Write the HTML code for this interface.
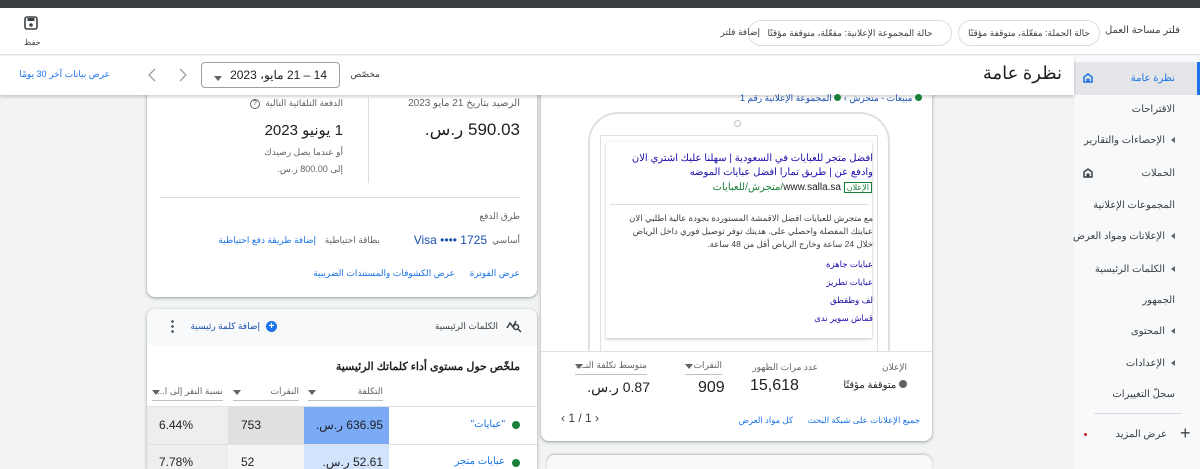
<!DOCTYPE html>
<html style="width:1200px;height:469px;overflow:hidden"><head><meta charset="utf-8"><style>
*{margin:0;padding:0;box-sizing:border-box}
body{width:1200px;height:469px;overflow:hidden;background:#f1f3f4;font-family:"Liberation Sans","Noto Sans CJK SC",sans-serif;color:#3c4043;font-size:10px;position:relative}
.a{position:absolute;white-space:nowrap}
.r{direction:rtl}
.blue{color:#1a73e8}
.card{position:absolute;background:#fff;border-radius:8px;box-shadow:0 1px 2px rgba(60,64,67,.3),0 1px 3px 1px rgba(60,64,67,.15)}
.nav{position:absolute;right:25px;font-size:10px;color:#3c4043;direction:rtl}
.tri{display:inline-block;width:0;height:0;border-top:3px solid transparent;border-bottom:3px solid transparent;border-right:4px solid #5f6368;margin-left:6px}
.hdr{border-bottom:1px solid #bdc1c6;padding-bottom:3px;font-size:9px;color:#5f6368;overflow:hidden}
.dd{display:inline-block;border-left:4px solid transparent;border-right:4px solid transparent;border-top:5px solid #5f6368}
</style></head><body>
<div class="a" style="left:0;top:0;width:1200px;height:8px;background:#3c4043"></div>
<div class="a" style="left:0;top:8px;width:1200px;height:47px;background:#fff;border-bottom:1px solid #e0e0e0"></div>
<svg class="a" style="left:24px;top:16px" width="14" height="14" viewBox="0 0 14 14"><rect x="1" y="1" width="12" height="12" rx="2" fill="none" stroke="#3c4043" stroke-width="1.6"/><rect x="3.5" y="2" width="7" height="3" fill="#3c4043"/><circle cx="7" cy="9" r="1.8" fill="#3c4043"/></svg>
<div class="a" style="left:24px;top:38px;font-size:8px">حفظ</div>
<div class="a r" style="right:20px;top:25px;font-size:10px">فلتر مساحة العمل</div>
<div class="a r" style="left:958px;top:20px;width:142px;height:26px;border:1px solid #dadce0;border-radius:13px;font-size:9px;line-height:24px;text-align:center;overflow:hidden">حالة الحملة: مفعّلة، متوقفة مؤقتًا</div>
<div class="a r" style="left:748px;top:20px;width:204px;height:26px;border:1px solid #dadce0;border-radius:13px;font-size:9px;line-height:24px;text-align:center;overflow:hidden">حالة المجموعة الإعلانية: مفعّلة، متوقفة مؤقتًا</div>
<div class="a r" style="right:440px;top:27px;font-size:9px">إضافة فلتر</div>
<!-- nav -->
<div class="a" style="left:1074px;top:56px;width:126px;height:413px;background:#f8f9fa"></div>
<div class="a" style="left:1074px;top:62px;width:123px;height:33px;background:#e3e5e8"></div>
<div class="a" style="left:1197px;top:62px;width:3px;height:33px;background:#1a73e8"></div>
<svg class="a" style="left:1083px;top:73px" width="10" height="10" viewBox="0 0 10 10"><path d="M1 9V4l4-3 4 3v5z" fill="none" stroke="#1a73e8" stroke-width="1.5"/><rect x="3.5" y="5.5" width="3" height="3.5" fill="#1a73e8"/></svg>
<div class="nav" style="top:73px;color:#1a73e8">نظرة عامة</div>
<div class="nav" style="top:104px">الاقتراحات</div>
<div class="nav" style="top:135px"><span class="tri"></span>الإحصاءات والتقارير</div>
<svg class="a" style="left:1083px;top:168px" width="10" height="10" viewBox="0 0 10 10"><path d="M1 9V4l4-3 4 3v5z" fill="none" stroke="#3c4043" stroke-width="1.5"/><rect x="3.5" y="5.5" width="3" height="3.5" fill="#3c4043"/></svg>
<div class="nav" style="top:168px">الحملات</div>
<div class="nav" style="top:200px">المجموعات الإعلانية</div>
<div class="nav" style="top:231px"><span class="tri"></span>الإعلانات ومواد العرض</div>
<div class="nav" style="top:264px"><span class="tri"></span>الكلمات الرئيسية</div>
<div class="nav" style="top:295px">الجمهور</div>
<div class="nav" style="top:326px"><span class="tri"></span>المحتوى</div>
<div class="nav" style="top:358px"><span class="tri"></span>الإعدادات</div>
<div class="nav" style="top:389px">سجلّ التغييرات</div>
<div class="a" style="left:1094px;top:413px;width:88px;height:1px;background:#dadce0"></div>
<div class="a" style="left:1180px;top:424px;font-size:18px;color:#3c4043;line-height:18px">+</div>
<div class="nav" style="top:429px;right:33px">عرض المزيد</div>
<div class="a" style="left:1084px;top:433px;width:3px;height:3px;border-radius:50%;background:#c5221f"></div>
<!-- cards -->
<div class="card" style="left:147px;top:60px;width:390px;height:237px"></div>
<div class="card" style="left:541px;top:80px;width:391px;height:361px"></div>
<div class="a" style="left:547px;top:455px;width:385px;height:14px;background:#f8f9fa;border-radius:8px 8px 0 0;box-shadow:0 -1px 2px rgba(60,64,67,.3)"></div>
<div class="a" style="left:147px;top:309px;width:390px;height:160px;background:#fff;border-radius:8px 8px 0 0;box-shadow:0 1px 2px rgba(60,64,67,.3),0 1px 3px 1px rgba(60,64,67,.15);overflow:hidden">
 <div style="position:absolute;left:0;top:0;width:390px;height:36px;background:#f8f9fa"></div>
</div>
<!-- subheader -->
<div class="a" style="left:0;top:56px;width:1074px;height:39px;background:#fff;box-shadow:0 2px 3px rgba(0,0,0,.18)"></div>
<div class="a r" style="right:138px;top:63px;font-size:18px;color:#202124;font-family:'Liberation Serif',serif">نظرة عامة</div>
<div class="a r" style="right:820px;top:69px;font-size:9px">مخصّص</div>
<div class="a" style="left:201px;top:62px;width:139px;height:26px;border:1px solid #9aa0a6;border-radius:4px"></div>
<div class="a" style="left:214px;top:73px"><span class="dd"></span></div>
<div class="a r" style="right:873px;top:68px;font-size:12px;color:#202124">14 – 21 مايو، 2023</div>
<svg class="a" style="left:178px;top:68px" width="10" height="14"><path d="M2 1l6 6-6 6" fill="none" stroke="#9aa0a6" stroke-width="1.3"/></svg>
<svg class="a" style="left:147px;top:68px" width="10" height="14"><path d="M8 1L2 7l6 6" fill="none" stroke="#9aa0a6" stroke-width="1.3"/></svg>
<div class="a r blue" style="right:1090px;top:69px;font-size:9px">عرض بيانات آخر 30 يومًا</div>
<!-- left card content -->
<div class="a r" style="right:680px;top:98px;font-size:10px;color:#5f6368">الرصيد بتاريخ 21 مايو 2023</div>
<div class="a r" style="right:680px;top:120px;font-size:17px;color:#202124">590.03 ر.س.</div>
<div class="a" style="left:368px;top:95px;width:1px;height:88px;background:#dadce0"></div>
<div class="a r" style="right:857px;top:98px;font-size:9px;color:#5f6368">الدفعة التلقائية التالية</div>
<div class="a" style="left:250px;top:99px;width:10px;height:10px;border:1px solid #5f6368;border-radius:50%;font-size:7px;text-align:center;line-height:8px">?</div>
<div class="a r" style="right:857px;top:121px;font-size:15px;color:#202124">1 يونيو 2023</div>
<div class="a r" style="right:857px;top:147px;font-size:9px;color:#5f6368">أو عندما يصل رصيدك</div>
<div class="a r" style="right:857px;top:164px;font-size:9px;color:#5f6368">إلى 800.00 ر.س.</div>
<div class="a" style="left:160px;top:197px;width:360px;height:1px;background:#dadce0"></div>
<div class="a r" style="right:680px;top:211px;font-size:9px;color:#5f6368">طرق الدفع</div>
<div class="a r" style="right:680px;top:235px;font-size:9px;color:#5f6368">أساسي</div>
<div class="a" style="right:713px;top:233px;font-size:12px;color:#1a4fb0">Visa •••• 1725</div>
<div class="a r" style="right:820px;top:235px;font-size:9px;color:#5f6368">بطاقة احتياطية</div>
<div class="a r blue" style="right:884px;top:235px;font-size:9px">إضافة طريقة دفع احتياطية</div>
<div class="a r blue" style="right:680px;top:268px;font-size:9px">عرض الفوترة</div>
<div class="a r blue" style="right:745px;top:268px;font-size:9px">عرض الكشوفات والمستندات الضريبية</div>
<!-- keywords card -->
<svg class="a" style="left:506px;top:319px" width="16" height="14" viewBox="0 0 16 14"><path d="M1 9l3-5 3 4 3-6" fill="none" stroke="#3c4043" stroke-width="1.5"/><circle cx="10" cy="8" r="2.5" fill="none" stroke="#3c4043" stroke-width="1.5"/><path d="M12 10l3 3" stroke="#3c4043" stroke-width="1.5"/></svg>
<div class="a r" style="right:702px;top:321px;font-size:9px">الكلمات الرئيسية</div>
<div class="a" style="left:266px;top:321px;width:11px;height:11px;border-radius:50%;background:#1a73e8;color:#fff;font-size:10px;line-height:11px;text-align:center;font-weight:bold">+</div>
<div class="a r" style="right:940px;top:321px;font-size:9px;color:#1a4fb0">إضافة كلمة رئيسية</div>
<div class="a" style="left:171px;top:319px;width:3px;height:14px;background:radial-gradient(circle,#5f6368 1.3px,transparent 1.5px) 0 0/3px 5px"></div>
<div class="a r" style="right:680px;top:360px;font-size:11px;font-weight:bold;color:#202124">ملخّص حول مستوى أداء كلماتك الرئيسية</div>
<div class="a" style="left:308px;top:386px;width:75px"><div class="hdr r"><span class="dd" style="float:left;margin-top:4px"></span>التكلفة</div></div>
<div class="a" style="left:233px;top:386px;width:66px"><div class="hdr r"><span class="dd" style="float:left;margin-top:4px"></span>النقرات</div></div>
<div class="a" style="left:152px;top:386px;width:71px"><div class="hdr r"><span class="dd" style="float:left;margin-top:4px"></span>نسبة النقر إلى ا...</div></div>
<div class="a" style="left:147px;top:406px;width:390px;height:1px;background:#e0e0e0"></div>
<div class="a" style="left:147px;top:407px;width:81px;height:37px;background:#eeeeee"></div>
<div class="a" style="left:228px;top:407px;width:76px;height:37px;background:#e0e0e0"></div>
<div class="a" style="left:304px;top:407px;width:85px;height:37px;background:#7baaf7"></div>
<div class="a" style="left:147px;top:444px;width:390px;height:1px;background:#e0e0e0"></div>
<div class="a" style="left:147px;top:445px;width:81px;height:24px;background:#eeeeee"></div>
<div class="a" style="left:228px;top:445px;width:76px;height:24px;background:#f5f5f5"></div>
<div class="a" style="left:304px;top:445px;width:85px;height:24px;background:#d2e3fc"></div>
<div class="a" style="left:512px;top:421px;width:8px;height:8px;border-radius:50%;background:#188038"></div>
<div class="a r blue" style="right:695px;top:419px;font-size:10px">"عبايات"</div>
<div class="a r" style="right:817px;top:418px;font-size:12px;color:#202124">636.95 ر.س.</div>
<div class="a" style="left:241px;top:418px;font-size:12px;color:#202124">753</div>
<div class="a" style="left:159px;top:418px;font-size:12px;color:#202124">6.44%</div>
<div class="a" style="left:512px;top:459px;width:8px;height:8px;border-radius:50%;background:#188038"></div>
<div class="a r blue" style="right:695px;top:456px;font-size:10px">عبايات متجر</div>
<div class="a r" style="right:817px;top:455px;font-size:12px;color:#202124">52.61 ر.س.</div>
<div class="a" style="left:241px;top:455px;font-size:12px;color:#202124">52</div>
<div class="a" style="left:159px;top:455px;font-size:12px;color:#202124">7.78%</div>
<!-- middle card content -->
<div class="a r" style="right:278px;top:93px;font-size:9px;color:#1a4fb0"><span style="display:inline-block;width:7px;height:7px;border-radius:50%;background:#188038"></span> مبيعات - متجرش › <span style="display:inline-block;width:7px;height:7px;border-radius:50%;background:#188038"></span> المجموعة الإعلانية رقم 1</div>
<div class="a" style="left:588px;top:112px;width:302px;height:239px;border:2px solid #e0e0e0;border-bottom:none;border-radius:30px 30px 0 0"></div>
<div class="a" style="left:734px;top:120px;width:7px;height:7px;border:1px solid #bdc1c6;border-radius:50%"></div>
<div class="a" style="left:600px;top:135px;width:278px;height:216px;border:1px solid #e0e0e0;border-bottom:none"></div>
<div class="a" style="left:606px;top:142px;width:266px;height:196px;background:#fff;box-shadow:0 1px 3px rgba(0,0,0,.25)"></div>
<div class="a r" style="right:327px;top:152px;width:258px;font-size:10px;line-height:14px;color:#1a0dab;white-space:normal">افضل متجر للعبايات في السعودية | سهلنا عليك اشتري الان وادفع عن | طريق تمارا افضل عبايات الموضه</div>
<div class="a r" style="right:328px;top:182px;font-size:10px;color:#202124"><span style="border:1px solid #188038;color:#188038;font-size:8px;padding:0 2px">الإعلان</span> www.salla.sa<span style="color:#188038">/متجرش/للعبايات</span></div>
<div class="a" style="left:610px;top:204px;width:258px;height:1px;background:#dadce0"></div>
<div class="a r" style="right:327px;top:212px;width:258px;font-size:8.5px;line-height:13px;color:#3c4043;white-space:normal">مع متجرش للعبايات افضل الاقمشة المستوردة بجودة عالية اطلبي الان عبايتك المفضلة واحصلي على. هديتك توفر توصيل فوري داخل الرياض خلال 24 ساعة وخارج الرياض أقل من 48 ساعة.</div>
<div class="a r" style="right:327px;top:259px;font-size:8.5px;color:#1a0dab">عبايات جاهزة</div>
<div class="a r" style="right:327px;top:277px;font-size:8.5px;color:#1a0dab">عبايات تطريز</div>
<div class="a r" style="right:327px;top:295px;font-size:8.5px;color:#1a0dab">لف وطقطق</div>
<div class="a r" style="right:327px;top:313px;font-size:8.5px;color:#1a0dab">قماش سوير ندى</div>
<div class="a" style="left:541px;top:351px;width:391px;height:1px;background:#e0e0e0"></div>
<div class="a r" style="right:293px;top:362px;font-size:9px;color:#5f6368">الإعلان</div>
<div class="a r" style="right:293px;top:380px;font-size:10px;color:#202124"><span style="display:inline-block;width:8px;height:8px;border-radius:50%;background:#5f6368"></span> متوقفة مؤقتًا</div>
<div class="a r" style="right:382px;top:362px;font-size:9px;color:#5f6368">عدد مرات الظهور</div>
<div class="a" style="left:750px;top:377px;font-size:16px;color:#202124">15,618</div>
<div class="a" style="left:685px;top:360px;width:37px"><div class="hdr r"><span class="dd" style="float:left;margin-top:4px"></span>النقرات</div></div>
<div class="a" style="left:698px;top:379px;font-size:16px;color:#202124">909</div>
<div class="a" style="left:575px;top:360px;width:72px"><div class="hdr r"><span class="dd" style="float:left;margin-top:4px"></span>متوسط تكلفة النـ...</div></div>
<div class="a r" style="right:550px;top:379px;font-size:14px;color:#202124">0.87 ر.س.</div>
<div class="a r blue" style="right:280px;top:415px;font-size:8.5px">جميع الإعلانات على شبكة البحث</div>
<div class="a r blue" style="right:407px;top:415px;font-size:8.5px">كل مواد العرض</div>
<div class="a" style="left:561px;top:411px;font-size:12px;color:#3c4043;direction:ltr">‹ 1 / 1 ›</div>
</body></html>
